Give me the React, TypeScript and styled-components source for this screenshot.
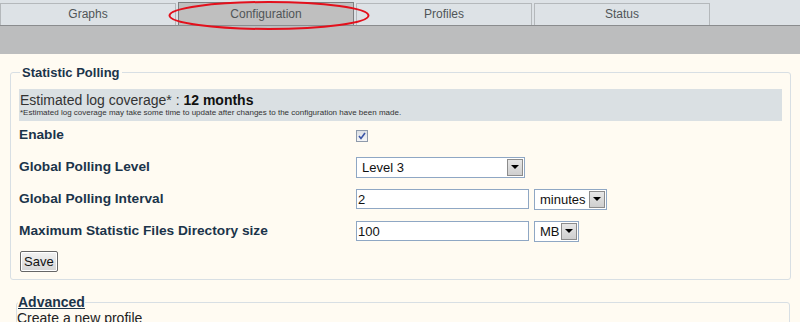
import React from "react";
import styled, { createGlobalStyle } from "styled-components";

let c = {
  cream: "#fffbf2",
  bar: "#dde2e6",
  strip: "#bcbdbe",
  navy: "#1b344a",
  line: "#d8dfe4",
  field: "#8fa7c4",
};

let Global = createGlobalStyle`
  html, body {
    margin: 0;
    padding: 0;
    background: ${c.cream};
    font-family: "Liberation Sans", Arial, sans-serif;
  }
`;

let Page = styled.div`
  width: 800px;
  height: 322px;
  overflow: hidden;
  position: relative;
  background: ${c.cream};
`;

let TabBar = styled.div`
  height: 26px;
  background: ${c.bar};
  border-bottom: 1px solid #8a8c8e;
  box-sizing: border-box;
  display: flex;
  align-items: flex-end;
  gap: 2px;
`;

let Tab = styled.div<{ $active?: boolean }>`
  width: 176px;
  height: ${(p) => (p.$active ? 23 : 22)}px;
  box-sizing: border-box;
  display: flex;
  align-items: center;
  justify-content: center;
  font-size: 12px;
  color: #505558;
  background: ${(p) => (p.$active ? "#bfbfbf" : c.bar)};
  border: 1px solid ${(p) => (p.$active ? "#7d7f80" : "#b4b8bb")};
  border-bottom: none;
  padding-bottom: 1px;
`;

let Strip = styled.div`
  height: 28px;
  background: ${c.strip};
`;

let Ring = styled.svg`
  position: absolute;
  left: 168px;
  top: 0;
`;

let Box = styled.fieldset`
  margin: 11px 9px 0 10px;
  padding: 0 8px 7px 8px;
  border: 1px solid ${c.line};
  border-radius: 3px;
`;

let Legend = styled.legend`
  font-size: 13px;
  font-weight: bold;
  color: ${c.navy};
  padding: 0 2px;
  margin-left: 1px;
`;

let Info = styled.div`
  background: #dae0e3;
  padding: 3px 2px 3px 1px;
  margin-top: 9px;
  color: #333;
`;

let InfoMain = styled.div`
  font-size: 14px;
  line-height: 16px;
  b {
    color: #111;
  }
`;

let InfoNote = styled.div`
  font-size: 8px;
  line-height: 10px;
`;

let Rows = styled.div`
  display: grid;
  grid-template-columns: 337px 1fr;
  grid-auto-rows: 32px;
  align-items: center;
  margin-top: -2px;
`;

let Label = styled.div`
  font-size: 13.7px;
  font-weight: bold;
  color: ${c.navy};
  margin-top: -2px;
`;

let Controls = styled.div`
  display: flex;
  align-items: center;
  gap: 5px;
`;

let Check = styled.span`
  width: 12px;
  height: 12px;
  box-sizing: border-box;
  border: 1px solid #8e9aab;
  background: linear-gradient(#dcdfe4, #f4f5f7);
  display: flex;
  align-items: center;
  justify-content: center;
  margin-top: 1px;
`;

let Select = styled.div<{ $w: number }>`
  width: ${(p) => p.$w}px;
  height: 21px;
  box-sizing: border-box;
  border: 1px solid ${c.field};
  background: #fff;
  display: flex;
  align-items: center;
  justify-content: space-between;
  padding: 0 1px 0 5px;
  font-size: 13px;
  color: #111;
`;

let Arrow = styled.span`
  width: 16px;
  height: 17px;
  box-sizing: border-box;
  border: 1px solid #8c8c8c;
  background: linear-gradient(#e6e6e6, #cfcfcf);
  display: flex;
  align-items: center;
  justify-content: center;
  &::after {
    content: "";
    border-left: 4px solid transparent;
    border-right: 4px solid transparent;
    border-top: 4px solid #000;
  }
`;

let Input = styled.div`
  width: 173px;
  height: 20px;
  box-sizing: border-box;
  border: 1px solid ${c.field};
  background: #fff;
  font-size: 13px;
  color: #111;
  display: flex;
  align-items: center;
  padding-left: 1px;
`;

let Button = styled.button`
  font-family: "Liberation Sans", Arial, sans-serif;
  font-size: 13px;
  color: #111;
  height: 21px;
  padding: 0 3px;
  border: 1px solid #666;
  border-radius: 2px;
  background: linear-gradient(#f2f2f2, #d6d6d6);
  box-shadow: inset 0 0 0 1px #fff;
  margin: 4px 0 0 1px;
`;

let Advanced = styled.fieldset`
  margin: 14px 10px 0 16px;
  padding: 0;
  border: 1px solid ${c.line};
  border-radius: 3px;
`;

let AdvLegend = styled.legend`
  font-size: 14px;
  font-weight: bold;
  color: ${c.navy};
  text-decoration: underline;
  padding: 0;
  margin-left: 1px;
`;

let Plain = styled.div`
  font-size: 14px;
  color: #222;
`;

let tabs = ["Graphs", "Configuration", "Profiles", "Status"];

export default function App() {
  return (
    <Page>
      <Global />
      <TabBar>
        {tabs.map((t) => (
          <Tab key={t} $active={t === "Configuration"}>
            {t}
          </Tab>
        ))}
      </TabBar>
      <Strip />
      <Ring width="202" height="31" viewBox="0 0 202 31">
        <ellipse cx="101" cy="15.5" rx="99.5" ry="13.5" fill="none" stroke="#e3101c" strokeWidth="2" />
      </Ring>

      <Box>
        <Legend>Statistic Polling</Legend>
        <Info>
          <InfoMain>
            Estimated log coverage* : <b>12 months</b>
          </InfoMain>
          <InfoNote>
            *Estimated log coverage may take some time to update after changes to the configuration have been made.
          </InfoNote>
        </Info>
        <Rows>
          <Label>Enable</Label>
          <Controls>
            <Check>
              <svg width="8" height="8" viewBox="0 0 8 8">
                <path d="M1 4 L3 6.5 L7 1" fill="none" stroke="#3b55a6" strokeWidth="1.6" />
              </svg>
            </Check>
          </Controls>
          <Label>Global Polling Level</Label>
          <Controls>
            <Select $w={169}>
              Level 3
              <Arrow />
            </Select>
          </Controls>
          <Label>Global Polling Interval</Label>
          <Controls>
            <Input>2</Input>
            <Select $w={73}>
              minutes
              <Arrow />
            </Select>
          </Controls>
          <Label>Maximum Statistic Files Directory size</Label>
          <Controls>
            <Input>100</Input>
            <Select $w={45}>
              MB
              <Arrow />
            </Select>
          </Controls>
        </Rows>
        <Button>Save</Button>
      </Box>

      <Advanced>
        <AdvLegend>Advanced</AdvLegend>
        <Plain>Create a new profile</Plain>
      </Advanced>
    </Page>
  );
}
